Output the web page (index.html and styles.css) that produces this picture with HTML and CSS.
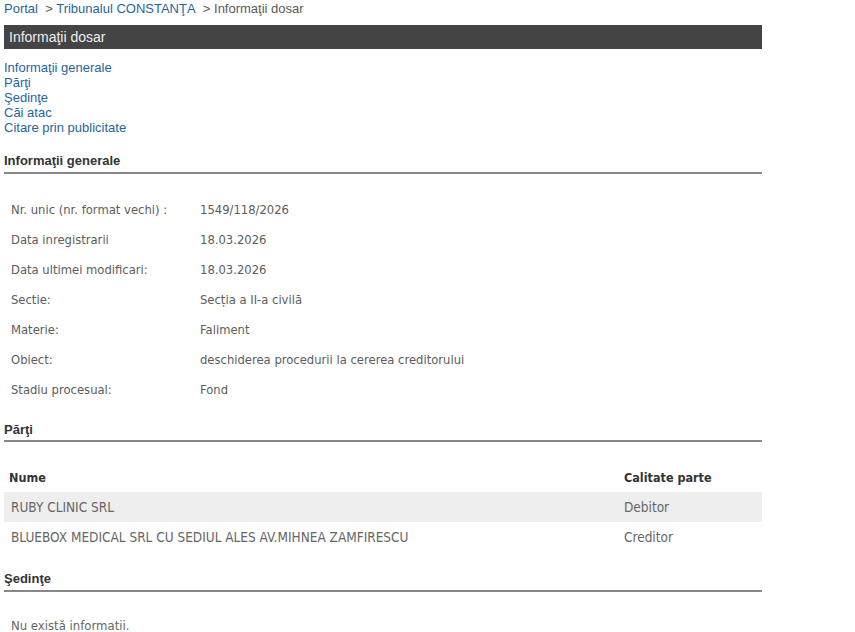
FILE: index.html
```html
<!DOCTYPE html>
<html lang="ro">
<head>
<meta charset="utf-8">
<title>Informaţii dosar</title>
<link rel="stylesheet" href="styles.css">
</head>
<body>
<div class="page">
  <div class="crumbs">
    <a href="#">Portal</a>&nbsp; &gt; <a href="#">Tribunalul CONSTANŢA</a>&nbsp; &gt; Informaţii dosar
  </div>
  <div class="titlebar">Informaţii dosar</div>
  <ul class="toc">
    <li><a href="#">Informaţii generale</a></li>
    <li><a href="#">Părţi</a></li>
    <li><a href="#">Şedinţe</a></li>
    <li><a href="#">Căi atac</a></li>
    <li><a href="#">Citare prin publicitate</a></li>
  </ul>

  <h2 class="section">Informaţii generale</h2>
  <table class="info">
    <tr><td class="lbl">Nr. unic (nr. format vechi) :</td><td>1549/118/2026</td></tr>
    <tr><td class="lbl">Data inregistrarii</td><td>18.03.2026</td></tr>
    <tr><td class="lbl">Data ultimei modificari:</td><td>18.03.2026</td></tr>
    <tr><td class="lbl">Sectie:</td><td>Secția a II-a civilă</td></tr>
    <tr><td class="lbl">Materie:</td><td>Faliment</td></tr>
    <tr><td class="lbl">Obiect:</td><td>deschiderea procedurii la cererea creditorului</td></tr>
    <tr><td class="lbl">Stadiu procesual:</td><td>Fond</td></tr>
  </table>

  <h2 class="section section-after">Părţi</h2>
  <table class="parti">
    <tr class="head"><th class="c-name">Nume</th><th class="c-role">Calitate parte</th></tr>
    <tr class="alt"><td>RUBY CLINIC SRL</td><td>Debitor</td></tr>
    <tr><td>BLUEBOX MEDICAL SRL CU SEDIUL ALES AV.MIHNEA ZAMFIRESCU</td><td>Creditor</td></tr>
  </table>

  <h2 class="section section-last">Şedinţe</h2>
  <div class="empty">Nu există informatii.</div>
</div>
</body>
</html>
```

FILE: styles.css
```css
html, body {
  margin: 0;
  padding: 0;
  background: #ffffff;
}

.page {
  width: 758px;
  margin-left: 4px;
  padding-top: 1px;
  font-family: "Liberation Sans", Arial, sans-serif;
  font-size: 13px;
  color: #555555;
}

a {
  color: #1f66a0;
  text-decoration: none;
}

.crumbs {
  line-height: 15px;
  height: 15px;
  color: #5a5a5a;
}

.titlebar {
  margin-top: 9px;
  height: 24px;
  line-height: 24px;
  background: #444444;
  color: #eeeeee;
  font-size: 14px;
  padding-left: 5px;
}

.toc {
  list-style: none;
  margin: 11px 0 0 0;
  padding: 0;
}

.toc li {
  line-height: 15px;
  height: 15px;
}

.section {
  margin: 18px 0 0 0;
  font-size: 13px;
  font-weight: bold;
  line-height: 15px;
  color: #333333;
  padding-bottom: 4px;
  border-bottom: 2px solid #888888;
}

.section-after {
  margin-top: 17px;
  padding-bottom: 3px;
}

.section-last {
  margin-top: 19px;
  padding-bottom: 4px;
}

.info {
  margin-top: 21px;
  border-collapse: collapse;
  width: 100%;
  font-family: "DejaVu Sans", Verdana, sans-serif;
  font-size: 11.6px;
  color: #5c5c5c;
}

.info td {
  height: 30px;
  padding: 0;
  vertical-align: middle;
}

.info td.lbl {
  width: 189px;
  padding-left: 7px;
}

.parti {
  margin-top: 20px;
  border-collapse: collapse;
  width: 100%;
  font-family: "DejaVu Sans Condensed", "DejaVu Sans", sans-serif;
  font-size: 13.5px;
  color: #666666;
}

.parti th, .parti td {
  height: 30px;
  padding: 0;
  text-align: left;
  vertical-align: middle;
}

.parti th {
  color: #333333;
  font-weight: bold;
  font-size: 12.5px;
}

.parti th.c-name {
  padding-left: 5px;
}

.parti td:first-child {
  padding-left: 7px;
}

.parti th.c-role, .parti td:last-child {
  width: 138px;
}

.parti tr.alt {
  background: #eeeeee;
}

.empty {
  margin-top: 20px;
  height: 28px;
  line-height: 28px;
  padding-left: 7px;
  font-family: "DejaVu Sans Condensed", "DejaVu Sans", sans-serif;
  font-size: 13px;
  color: #666666;
}
```
